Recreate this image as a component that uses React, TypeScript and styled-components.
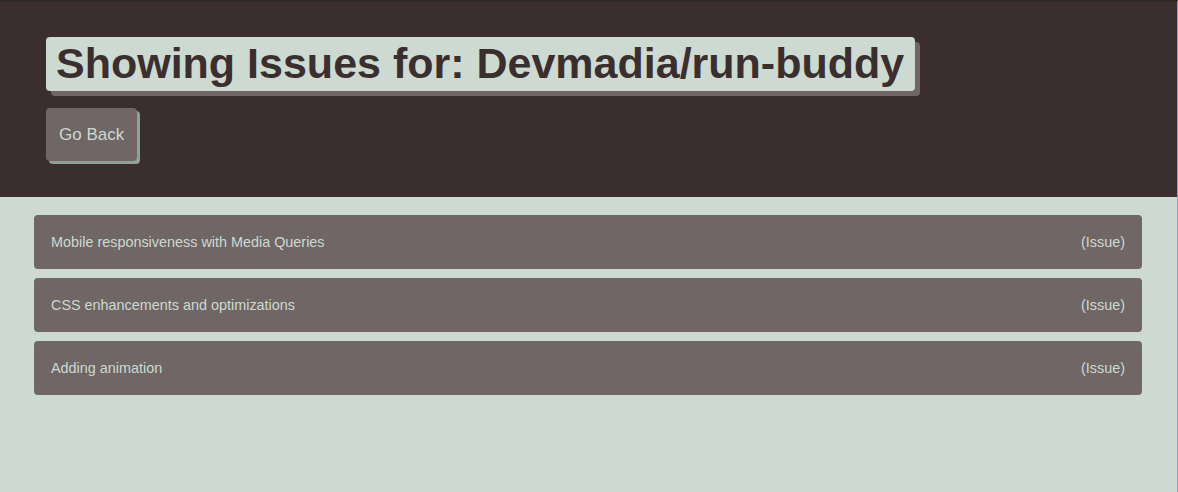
import React from "react";
import styled, { createGlobalStyle } from "styled-components";

const Global = createGlobalStyle`
  html, body { margin: 0; padding: 0; }
  body {
    background: #ccdad1;
    font-family: "Liberation Sans", Arial, sans-serif;
    min-height: 492px;
    box-sizing: border-box;
    border-top: 2px solid #2e2a2a;
    border-right: 1px solid #9a9ad0;
  }
  * { box-sizing: border-box; }
`;

const Header = styled.header`
  background: #3a2f2e;
  padding: 35px 46px 36px;
  display: flex;
  flex-direction: column;
  align-items: flex-start;
  gap: 17px;
`;

const Title = styled.h1`
  margin: 0;
  background: #ccdad1;
  color: #3a2f2e;
  font-size: 43px;
  font-weight: 700;
  line-height: 52px;
  padding: 0 11px 2px 10px;
  border-radius: 4px;
  box-shadow: 5px 5px 0 #6f6665;
`;

const BackButton = styled.button`
  font-family: "Liberation Sans", Arial, sans-serif;
  background: #6f6665;
  color: #ccdad1;
  border: none;
  border-radius: 4px;
  font-size: 17px;
  height: 53px;
  padding: 0 13px;
  box-shadow: 3px 3px 0 #8fa29a;
  cursor: pointer;
`;

const List = styled.main`
  display: flex;
  flex-direction: column;
  gap: 9px;
  padding: 18px 35px 0 34px;
`;

const Row = styled.a`
  display: flex;
  justify-content: space-between;
  align-items: center;
  height: 54px;
  padding: 0 17px 1px;
  background: #6f6665;
  color: #ccdad1;
  border-radius: 4px;
  font-size: 14.4px;
  text-decoration: none;
`;

const issues = [
  "Mobile responsiveness with Media Queries",
  "CSS enhancements and optimizations",
  "Adding animation",
];

export default function App() {
  return (
    <>
      <Global />
      <Header>
        <Title>Showing Issues for: Devmadia/run-buddy</Title>
        <BackButton>Go Back</BackButton>
      </Header>
      <List>
        {issues.map((t) => (
          <Row key={t} href="#">
            <span>{t}</span>
            <span>(Issue)</span>
          </Row>
        ))}
      </List>
    </>
  );
}
